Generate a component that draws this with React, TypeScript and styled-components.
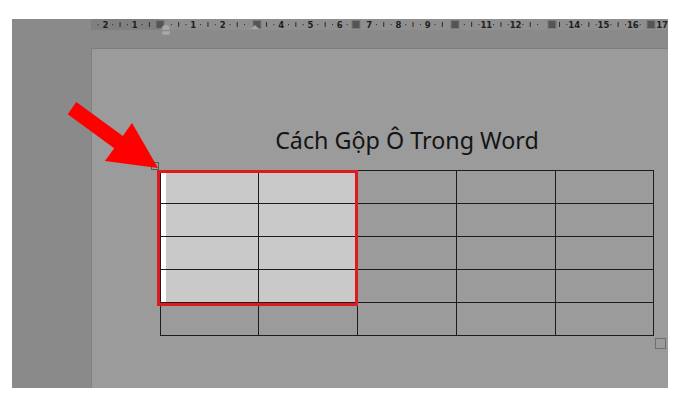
import React from "react";
import styled, { createGlobalStyle } from "styled-components";

const Global = createGlobalStyle`
  html, body { margin: 0; padding: 0; background: #ffffff; }
  body { font-family: "Noto Sans", "Open Sans", sans-serif; }
`;

const Stage = styled.div`
  position: relative;
  width: 688px;
  height: 400px;
  padding: 19px 20px 12px 12px;
  box-sizing: border-box;
`;

const Frame = styled.div`
  height: 369px;
  display: grid;
  grid-template-columns: 79px 1fr;
  grid-template-rows: 29px 1fr;
  background: #8a8a8a;
`;

const RulerSlot = styled.div`
  grid-column: 2;
  grid-row: 1;
  height: 11px;
`;

const Page = styled.div`
  grid-column: 2;
  grid-row: 2;
  background: #9b9b9b;
  border-top: 1px solid #7f7f7f;
  border-left: 1px solid #808080;
  padding: 76px 14px 0 68px;
  display: flex;
  flex-direction: column;
`;

const Title = styled.h1`
  margin: 0 0 15px 0;
  width: 494px;
  text-align: center;
  font-family: "Noto Sans", "Open Sans", sans-serif;
  font-weight: 400;
  font-size: 23.3px;
  line-height: 30px;
  color: #141414;
`;

const TableWrap = styled.div`
  position: relative;
  width: 494px;
`;

const Grid = styled.div`
  display: grid;
  grid-template-columns: 98px 99px 99px 99px 98px;
  grid-template-rows: repeat(5, 33px);
  border-top: 1px solid #1c1c1c;
  border-left: 1px solid #1c1c1c;
`;

const Cell = styled.div<{ $sel: boolean; $first: boolean }>`
  border-right: 1px solid #1c1c1c;
  border-bottom: 1px solid #1c1c1c;
  background: ${(p) => (p.$sel ? "#c9c9c9" : "transparent")};
  box-shadow: ${(p) => (p.$sel && p.$first ? "inset 5px 0 0 #ffffff" : "none")};
`;

const RedBox = styled.div`
  position: absolute;
  left: -3px;
  top: 0;
  width: 201px;
  height: 136px;
  box-sizing: border-box;
  border: 3px solid #dc1a20;
`;

const MoveHandle = styled.div`
  position: absolute;
  left: -9px;
  top: -8px;
  width: 8px;
  height: 8px;
  border: 1px solid #5a5a5a;
  box-sizing: border-box;
  background: #9b9b9b;
`;

const ResizeHandle = styled.div`
  position: absolute;
  right: -12px;
  bottom: -13px;
  width: 11px;
  height: 11px;
  border: 1px solid #6e6e6e;
  box-sizing: border-box;
`;

const Overlay = styled.svg`
  position: absolute;
  left: 0;
  top: 0;
  pointer-events: none;
`;

const RULER_X0 = 91;
const origin = 164 - RULER_X0;
const step = 29.3;
const markers = [160, 257, 356, 455, 552, 651].map((x) => x - RULER_X0);

function Ruler() {
  const items: React.ReactNode[] = [];
  for (let q = -10; q <= 70; q++) {
    const x = origin + (q * step) / 4;
    if (x < 4 || x > 574) continue;
    const n = q / 4;
    if (q % 4 === 0) {
      const num = Math.abs(n);
      if (num === 0) continue;
      if (markers.some((m) => Math.abs(m - x) < 8)) continue;
      items.push(
        <text key={q} x={x} y={8.5} fontSize={8.5} fontWeight={700} textAnchor="middle" fill="#1e1e1e" fontFamily="'DejaVu Sans', sans-serif">
          {num}
        </text>
      );
    } else if (q % 2 === 0) {
      if (markers.some((m) => Math.abs(m - x) < 6)) continue;
      items.push(<rect key={q} x={x - 0.5} y={3} width={1} height={5} fill="#2a2a2a" />);
    } else {
      if (markers.some((m) => Math.abs(m - x) < 6)) continue;
      items.push(<rect key={q} x={x - 0.5} y={5} width={1} height={1.2} fill="#333" />);
    }
  }
  return (
    <svg width={577} height={17} style={{ display: "block", overflow: "visible" }}>
      <rect x={0} y={0} width={577} height={11} fill="#8f8f8f" />
      <rect x={0} y={0} width={69} height={11} fill="#808080" />
      {items}
      {markers.map((m, i) => (
        <rect key={"m" + i} x={m - 4} y={1.5} width={8} height={8} fill="#555" stroke="#7a7a7a" strokeWidth={1} />
      ))}
      <path d="M71 8 L75 5 L79 8 L79 11 L71 11 Z" fill="#a8a8a8" stroke="#8a8a8a" strokeWidth={0.6} />
      <rect x={71} y={12} width={8} height={4} fill="#a8a8a8" stroke="#8a8a8a" strokeWidth={0.6} />
      <path d="M160 10 L164 6 L168 10 Z" fill="#a8a8a8" />
    </svg>
  );
}

export default function App() {
  const rows = [0, 1, 2, 3, 4];
  const cols = [0, 1, 2, 3, 4];
  return (
    <>
      <Global />
      <Stage>
        <Frame>
          <RulerSlot>
            <Ruler />
          </RulerSlot>
          <Page>
            <Title>Cách Gộp Ô Trong Word</Title>
            <TableWrap>
              <Grid>
                {rows.map((r) =>
                  cols.map((c) => (
                    <Cell key={`${r}-${c}`} $sel={r < 4 && c < 2} $first={c === 0} />
                  ))
                )}
              </Grid>
              <RedBox />
              <MoveHandle />
              <ResizeHandle />
            </TableWrap>
          </Page>
        </Frame>
        <Overlay width={688} height={400}>
          <polygon
            points="76.3,101.9 122.8,135.9 132,123 158,168 105,161 114.2,148.2 67.7,114.2"
            fill="#ff0000"
          />
        </Overlay>
      </Stage>
    </>
  );
}
